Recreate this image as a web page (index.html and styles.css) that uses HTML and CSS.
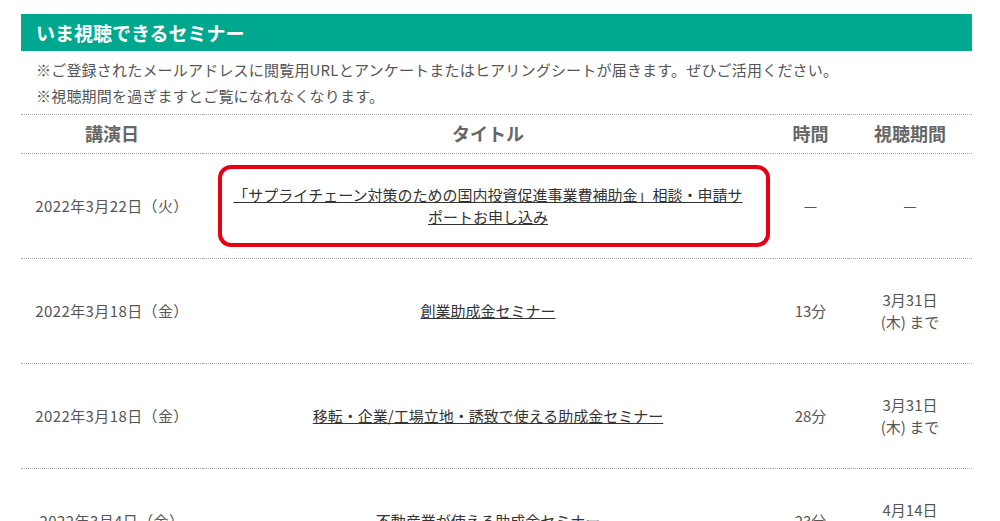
FILE: index.html
```html
<!DOCTYPE html>
<html lang="ja">
  <head>
    <meta charset="UTF-8" />
    <title>いま視聴できるセミナー</title>
    <link rel="stylesheet" href="styles.css">
  </head>
  <body>
    <div class="container">
      <h2 class="section-title">いま視聴できるセミナー</h2>
      <div class="notes">
        <p>※ご登録されたメールアドレスに閲覧用URLとアンケートまたはヒアリングシートが届きます。ぜひご活用ください。</p>
        <p>※視聴期間を過ぎますとご覧になれなくなります。</p>
      </div>

      <table class="seminar-table">
        <colgroup>
          <col class="col-date" />
          <col class="col-title" />
          <col class="col-time" />
          <col class="col-period" />
        </colgroup>
        <thead>
          <tr>
            <th>講演日</th>
            <th>タイトル</th>
            <th>時間</th>
            <th>視聴期間</th>
          </tr>
        </thead>
        <tbody>
          <tr>
            <td class="date">2022年3月22日（火）</td>
            <td class="title">
              <div class="marked">
                <a href="#">「サプライチェーン対策のための国内投資促進事業費補助金」相談・申請サポートお申し込み</a>
              </div>
            </td>
            <td>—</td>
            <td>—</td>
          </tr>
          <tr>
            <td class="date">2022年3月18日（金）</td>
            <td class="title"><a href="#">創業助成金セミナー</a></td>
            <td>13分</td>
            <td>3月31日<br />(木) まで</td>
          </tr>
          <tr>
            <td class="date">2022年3月18日（金）</td>
            <td class="title"><a href="#">移転・企業/工場立地・誘致で使える助成金セミナー</a></td>
            <td>28分</td>
            <td>3月31日<br />(木) まで</td>
          </tr>
          <tr>
            <td class="date">2022年3月4日（金）</td>
            <td class="title"><a href="#">不動産業が使える助成金セミナー</a></td>
            <td>23分</td>
            <td>4月14日<br />(木) まで</td>
          </tr>
        </tbody>
      </table>
    </div>
  </body>
</html>
```

FILE: styles.css
```css
body {
  margin: 0;
  background: white;
  font-family: "Noto Sans CJK JP", "Noto Sans", sans-serif;
  color: #555;
}

.container {
  width: 951px;
  margin: 14px 0 0 21px;
}

.section-title {
  margin: 0;
  height: 37px;
  padding-left: 15px;
  background: #00a88f;
  color: white;
  font-size: 19px;
  font-weight: bold;
  line-height: 37px;
}

.notes {
  padding: 6px 15px 5px;
}

.notes p {
  margin: 0;
  font-size: 15px;
  line-height: 26px;
  letter-spacing: 0.2px;
  color: #555;
}

.seminar-table {
  width: 100%;
  table-layout: fixed;
  border-collapse: collapse;
}

.col-date {
  width: 182px;
}

.col-title {
  width: 570px;
}

.col-time {
  width: 75px;
}

.col-period {
  width: 124px;
}

.seminar-table th,
.seminar-table td {
  border-top: 1px dotted #aaa;
  border-bottom: 1px dotted #aaa;
  text-align: center;
}

.seminar-table th {
  padding: 5px 0 6px;
  font-size: 18px;
  line-height: 27px;
  font-weight: bold;
  color: #666;
}

.seminar-table td {
  padding: 30px 10px;
  font-size: 15px;
  line-height: 22px;
  color: #555;
}

.seminar-table td.date {
  padding: 30px 0;
  letter-spacing: 0.4px;
}

.seminar-table td.title {
  padding: 30px 25px;
}

.title a {
  color: #333;
  text-decoration: underline;
}

.marked {
  position: relative;
}

.marked::after {
  content: "";
  position: absolute;
  top: -19px;
  bottom: -19px;
  left: -10px;
  right: -22px;
  border: 4px solid #e60012;
  border-radius: 13px;
}
```
